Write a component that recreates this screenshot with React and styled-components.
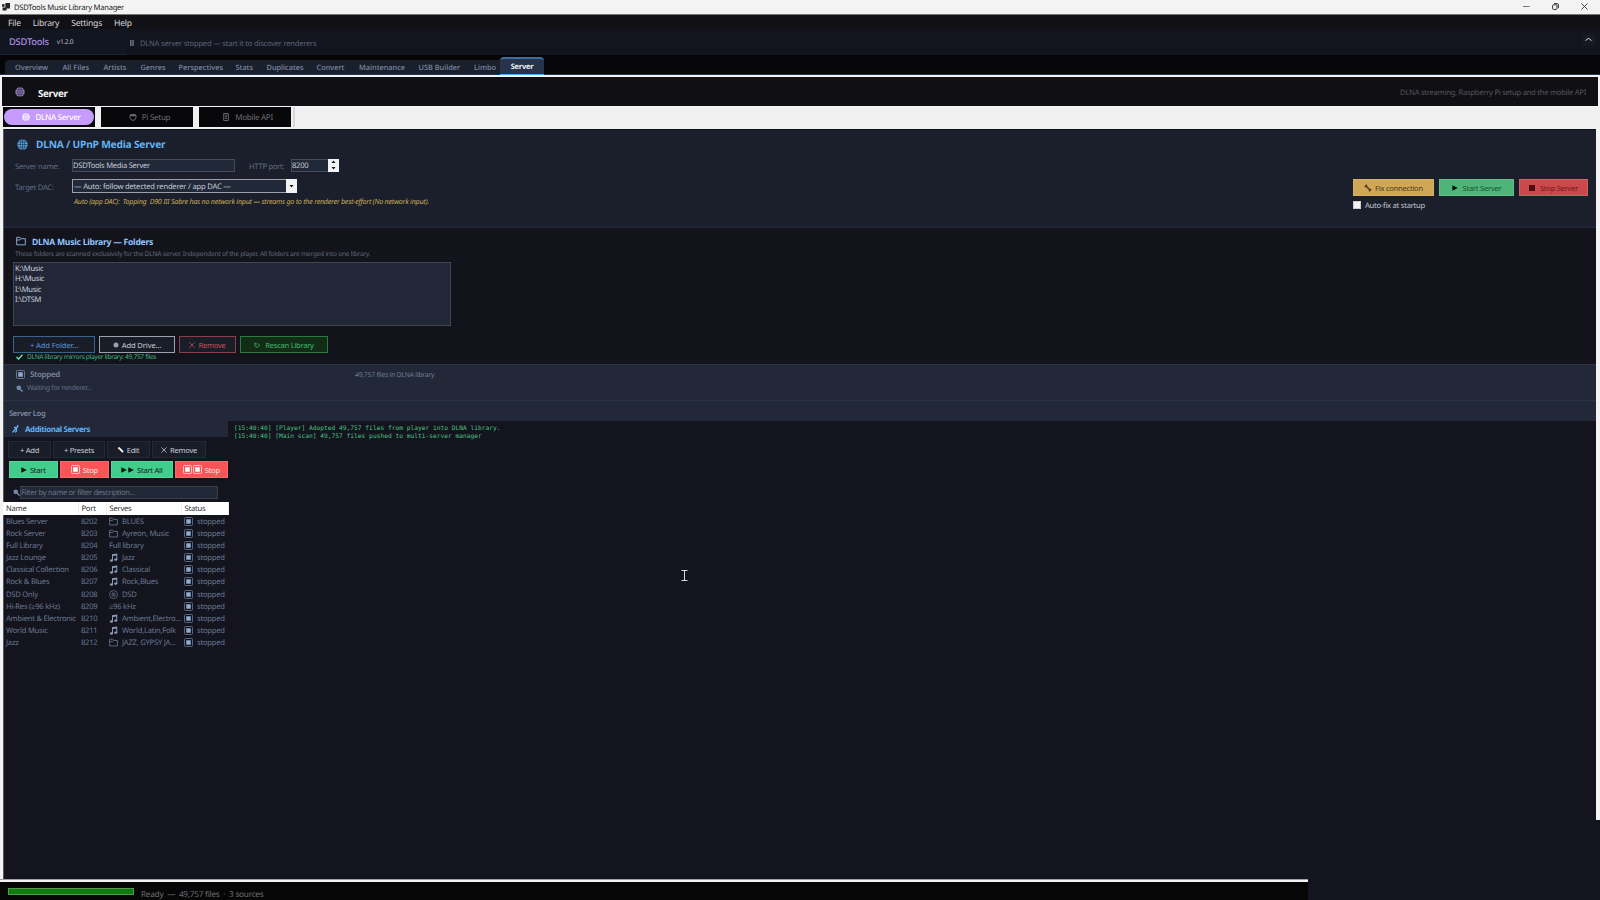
import React from 'react';
import styled, { createGlobalStyle } from 'styled-components';

const sans = "'Noto Sans', 'Open Sans', sans-serif";
const mono = "'DejaVu Sans Mono', 'Liberation Mono', monospace";

const GlobalStyle = createGlobalStyle`
  * {
    box-sizing: border-box;
  }
  body {
    margin: 0;
    background: #13141d;
    font-family: ${sans};
    text-rendering: geometricPrecision;
    overflow: hidden;
  }
  svg {
    display: block;
    flex: none;
  }
`;

const Window = styled.div`
  display: flex;
  flex-direction: column;
  width: 1600px;
  height: 900px;
  overflow: hidden;
  white-space: nowrap;
`;

const Text = styled.span`
  flex: none;
  padding-top: ${({ $pt = 2 }) => $pt}px;
  font-size: ${({ $size }) => $size || 7.6}px;
  font-weight: ${({ $weight }) => $weight || 400};
  font-style: ${({ $italic }) => ($italic ? 'italic' : 'normal')};
  letter-spacing: ${({ $track = -0.034 }) => $track}em;
  color: ${({ $color }) => $color || 'inherit'};
  margin-left: ${({ $ml }) => $ml || 0}px;
`;

const TitleBar = styled.header`
  display: flex;
  align-items: center;
  height: 15px;
  padding: 0 12px 0 2px;
  background: #f3f3f3;
  color: #222;
  border-bottom: 1px solid #777;
`;

const WindowButtons = styled.div`
  display: flex;
  align-items: center;
  gap: 22px;
  margin-left: auto;
`;

const MenuBar = styled.nav`
  display: flex;
  align-items: center;
  gap: 12px;
  height: 14px;
  padding-left: 8px;
  background: #111115;
  color: #d6d6da;
`;

const InfoBar = styled.div`
  display: flex;
  height: 26px;
  background: #12141e;
`;

const Brand = styled.div`
  display: flex;
  align-items: center;
  width: 126px;
  padding: 0 0 1px 9px;
  background: #111620;
  border-bottom: 1px solid #182335;
`;

const RendererStatus = styled.div`
  display: flex;
  flex: 1;
  align-items: center;
  padding: 2px 0 0 4px;
  color: #5c6477;
`;

const Collapse = styled.div`
  display: flex;
  align-items: center;
  justify-content: center;
  width: 13px;
  height: 12px;
  margin: 5px 5px 0 0;
  background: #1a1823;
`;

const NavBar = styled.nav`
  display: flex;
  align-items: flex-end;
  height: 21px;
  padding-left: 5px;
  background: #060608;
  border-bottom: 1px solid #1f3552;
`;

const NavTabs = styled.div`
  display: flex;
  align-items: center;
  width: 495px;
  height: 14px;
  padding: 2px 0 0 10px;
  background: #1a202b;
  border-radius: 4px 0 0 0;
  color: #7d8ba5;
`;

const NavTab = styled.div`
  width: ${({ $width }) => $width}px;
  font-size: 7.4px;
  font-weight: 500;
`;

const ActiveTab = styled.div`
  width: 44px;
  height: 18px;
  margin-bottom: -1px;
  padding-top: 3px;
  background: #283349;
  border-top: 2px solid #3e6c9f;
  border-bottom: 1px solid #57a5e8;
  border-radius: 4px 4px 0 0;
  color: #e9eef6;
  font-size: 7.5px;
  line-height: 11px;
  font-weight: 700;
  letter-spacing: -0.035em;
  text-align: center;
`;

const PageHeader = styled.div`
  display: flex;
  align-items: center;
  height: 32px;
  padding: 1px 12px 0 13px;
  background: #101014;
  border: solid #f4f4f8;
  border-width: 2px 2px 1px 2px;
`;

const HeaderNote = styled.div`
  display: flex;
  margin-left: auto;
  color: #56565e;
`;

const SubTabs = styled.div`
  display: flex;
  gap: 6px;
  height: 22px;
  padding: 0 0 2px 3px;
  background: #f0f0f0;
`;

const SubTab = styled.div`
  display: flex;
  width: 92px;
  height: 20px;
  padding: 2px 1px;
  background: #08080b;
  color: ${({ $active }) => ($active ? '#fff' : '#6c6c73')};
`;

const SubTabFace = styled.div`
  display: flex;
  flex: 1;
  align-items: center;
  justify-content: center;
  gap: 5px;
  padding-left: 5px;
  border-radius: 8px;
  background: ${({ $active }) => ($active ? '#c59cfc' : 'transparent')};
`;

const SubTabsEnd = styled.div`
  width: 2px;
  height: 20px;
  margin-left: -4px;
  background: #d8d8d8;
`;

const Workspace = styled.main`
  display: flex;
  height: 750px;
`;

const Edge = styled.div`
  width: 4px;
  height: ${({ $height }) => $height}px;
  background: #f3f3f3;
  border-right: ${({ $shade }) => ($shade ? '1px solid #55565e' : 'none')};
`;

const Panel = styled.div`
  flex: 1;
  background: #13141d;
  border-top: 1px solid #0d1016;
`;

const ServerConfig = styled.section`
  display: flex;
  justify-content: space-between;
  height: 98px;
  padding: 8px 7px 0 11px;
  background: #1a1f2b;
  border-bottom: 2px solid #202534;
`;

const SectionTitle = styled.h2`
  display: flex;
  align-items: center;
  height: ${({ $height }) => $height}px;
  margin: 0;
  padding-left: ${({ $pl }) => $pl || 0}px;
  color: #8ab4e6;
`;

const FormRow = styled.div`
  display: flex;
  align-items: center;
  height: 14px;
  margin-top: ${({ $mt }) => $mt}px;
`;

const FieldLabel = styled.label`
  width: ${({ $width }) => $width}px;
  margin-left: ${({ $ml }) => $ml || 0}px;
  padding-top: 4px;
  font-size: 7.6px;
  line-height: 10px;
  letter-spacing: -0.034em;
  color: #616d85;
`;

const Field = styled.div`
  display: flex;
  align-items: center;
  justify-content: space-between;
  width: ${({ $width }) => $width}px;
  height: ${({ $height }) => $height || 13}px;
  background: #212837;
  border: 1px solid ${({ $border }) => $border || '#454b5a'};
  color: #c6cbd6;
`;

const Spinner = styled.div`
  display: flex;
  flex-direction: column;
  align-items: center;
  justify-content: space-around;
  width: 11px;
  height: 13px;
  margin-right: -1px;
  background: #f2f2f2;
`;

const DropButton = styled.div`
  display: flex;
  align-items: center;
  justify-content: center;
  width: 11px;
  height: 14px;
  margin-right: -1px;
  background: #f2f2f2;
`;

const Hint = styled.div`
  display: flex;
  align-items: center;
  height: 15px;
  padding-left: 59px;
  color: #c8ab58;
`;

const ServerActions = styled.div`
  display: grid;
  grid-template-columns: 81px 75px 69px;
  align-content: start;
  column-gap: 5px;
  margin: 41px 1px 0 0;
`;

const SolidButton = styled.button`
  display: flex;
  align-items: center;
  justify-content: center;
  gap: ${({ $gap }) => $gap || 3}px;
  width: ${({ $width }) => ($width ? `${$width}px` : 'auto')};
  height: 17px;
  padding: 0;
  border: 1px solid rgba(255, 255, 255, 0.12);
  background: ${({ $bg }) => $bg};
  color: ${({ $fg }) => $fg};
  font-family: inherit;
  overflow: hidden;
`;

const CheckRow = styled.label`
  display: flex;
  align-items: center;
  height: 12px;
  margin-top: 3px;
  color: #c3c8d2;
`;

const CheckBox = styled.span`
  width: 8px;
  height: 8px;
  background: #f3f3f3;
  border: 1px solid #ccc;
`;

const FolderSection = styled.section`
  height: 136px;
  padding: 7px 0 0 9px;
  background: #12131b;
`;

const FolderNote = styled.div`
  display: flex;
  align-items: center;
  height: 10px;
  margin: 0 0 5px 2px;
  color: #626a7c;
`;

const FolderList = styled.ul`
  width: 438px;
  height: 64px;
  margin: 0;
  padding: 1px 1px;
  list-style: none;
  background: #212736;
  border: 1px solid #41464f;
  color: #c9cfdb;
  font-size: 7.6px;
  line-height: 10.35px;
  letter-spacing: -0.034em;
`;

const ButtonRow = styled.div`
  display: flex;
  gap: ${({ $gap }) => $gap}px;
  margin-top: ${({ $mt }) => $mt}px;
  margin-left: ${({ $ml }) => $ml || 0}px;
`;

const OutlineButton = styled.button`
  display: flex;
  align-items: center;
  justify-content: center;
  gap: ${({ $gap }) => $gap || 3}px;
  width: ${({ $width }) => $width}px;
  height: 17px;
  padding: 0;
  background: ${({ $bg }) => $bg || '#191d28'};
  border: 1px solid ${({ $border }) => $border || '#242936'};
  color: ${({ $fg }) => $fg || '#c7ccd6'};
  font-family: inherit;
`;

const Mirrors = styled.div`
  display: flex;
  align-items: center;
  height: 7px;
  padding-left: 3px;
  color: #41b883;
`;

const StatusSection = styled.section`
  height: 37px;
  padding: 2px 0 0 12px;
  background: #222838;
  border-top: 1px solid #2a3244;
  border-bottom: 1px solid #2b3243;
`;

const StatusRow = styled.div`
  display: flex;
  align-items: center;
  height: 14px;
  color: #7c879d;
`;

const LogTitle = styled.div`
  display: flex;
  align-items: center;
  height: 20px;
  padding: 3px 0 0 5px;
  background: #222838;
  color: #7f8ba4;
`;

const LogArea = styled.div`
  display: flex;
`;

const Additional = styled.aside`
  width: 224px;
`;

const AdditionalHeader = styled.div`
  display: flex;
  align-items: center;
  height: 16px;
  padding-left: 8px;
  background: #222838;
`;

const ButtonPad = styled.div`
  padding: 4px 0 0 5px;
`;

const FilterRow = styled.div`
  display: flex;
  align-items: center;
  height: 13px;
  margin-top: 8px;
  padding-left: 9px;
`;

const ServerTable = styled.table`
  width: 225px;
  margin: 3px 0 0 -1px;
  border-collapse: collapse;
  table-layout: fixed;
  font-size: 7.6px;
  letter-spacing: -0.03em;
  color: #6c7892;
  th,
  td {
    height: 12.08px;
    padding: 1px 0 0 3px;
    line-height: 11px;
    text-align: left;
    font-weight: 400;
  }
  th {
    height: 13px;
    background: #fff;
    color: #333;
    border-right: 1px solid #eee;
  }
`;

const TableCol = styled.col`
  width: ${({ $width }) => $width}px;
`;

const CellText = styled.div`
  height: 11px;
  line-height: 13px;
`;

const CellContent = styled.div`
  display: flex;
  align-items: center;
  gap: 4px;
  height: 11px;
  line-height: 11px;
`;

const LogOutput = styled.pre`
  margin: 0;
  padding: 4px 0 0 6px;
  font-family: ${mono};
  font-size: 6.24px;
  line-height: 8.4px;
  color: #4cc286;
`;

const BottomLine = styled.div`
  width: 1308px;
  height: 3px;
  background: #f3f3f3;
  border-top: 1px solid #a0a0a4;
`;

const StatusBar = styled.footer`
  display: flex;
  width: 1308px;
  height: 18px;
  padding: 6px 0 0 8px;
  background: #060607;
  color: #6e6e73;
`;

const Progress = styled.div`
  width: 126px;
  height: 7px;
  background: #107c10;
  border: 1px solid #4d9b4d;
`;

const Cursor = styled.div`
  position: absolute;
  left: 681px;
  top: 570px;
`;

function Globe({ size = 10, color, line = '#1a1f2b' }) {
  return (
    <svg width={size} height={size} viewBox="0 0 12 12">
      <circle cx="6" cy="6" r="5.6" fill={color} />
      <g fill="none" stroke={line} strokeWidth="0.6">
        <ellipse cx="6" cy="6" rx="2.5" ry="5.4" />
        <path d="M6 .5v11M.5 6h11M1.3 3.3h9.4M1.3 8.7h9.4" />
      </g>
    </svg>
  );
}

const FolderIcon = ({ size = 9 }) => (
  <svg width={size} height={size} viewBox="0 0 12 12" fill="none" stroke="currentColor" strokeWidth="1.1">
    <path d="M.8 10.6V1.6h4l1.2 1.6h5.2v7.4zM.8 4.8h3.8L6 3.2" />
  </svg>
);

const NoteIcon = () => (
  <svg width="9" height="9" viewBox="0 0 12 12" fill="#8a9cba">
    <path d="M4 1.6 11 .6v8H9.7V3.4L5.3 4v6.2H4z" />
    <ellipse cx="3.3" cy="10" rx="2.1" ry="1.6" />
    <ellipse cx="9" cy="8.8" rx="2.1" ry="1.6" />
  </svg>
);

const DiscIcon = () => (
  <svg width="9" height="9" viewBox="0 0 12 12" fill="none" stroke="currentColor">
    <circle cx="6" cy="6" r="5.3" />
    <circle cx="6" cy="6" r="2.2" />
    <circle cx="6" cy="6" r=".6" />
  </svg>
);

const StopIcon = ({ size = 9, fill = '#8eabd4' }) => (
  <svg width={size} height={size} viewBox="0 0 12 12">
    <rect x=".7" y=".7" width="10.6" height="10.6" rx="1.2" fill="none" stroke="currentColor" strokeWidth="1.1" />
    <rect x="3" y="3" width="6" height="6" fill={fill} />
  </svg>
);

const SearchIcon = () => (
  <svg width="7" height="7" viewBox="0 0 10 10">
    <circle cx="4" cy="4" r="3.4" fill="#6f87a8" />
    <path d="m6 6 3.3 3.3" stroke="#8d9bb0" strokeWidth="1.7" />
  </svg>
);

const PlayIcon = () => (
  <svg width="6" height="6" viewBox="0 0 6 6">
    <path d="M.3.2 5.8 3 .3 5.8z" fill="#0b120e" />
  </svg>
);

const CrossIcon = ({ size = 6 }) => (
  <svg width={size} height={size} viewBox="0 0 8 8" stroke="currentColor" strokeWidth="1">
    <path d="m.5.5 7 7m0-7-7 7" />
  </svg>
);

const Triangle = ({ up }) => (
  <svg width="5" height="3" viewBox="0 0 5 3">
    <path d={up ? 'M.5 3h4L2.5.4z' : 'M.5 0h4L2.5 2.6z'} fill="#111" />
  </svg>
);

const navTabs = [
  ['Overview', 47.5],
  ['All Files', 41],
  ['Artists', 37],
  ['Genres', 38],
  ['Perspectives', 57],
  ['Stats', 31],
  ['Duplicates', 50],
  ['Convert', 42.5],
  ['Maintenance', 59.5],
  ['USB Builder', 55.5],
  ['Limbo', 26],
];

const servers = [
  ['Blues Server', 8202, 'folder', 'BLUES'],
  ['Rock Server', 8203, 'folder', 'Ayreon, Music'],
  ['Full Library', 8204, null, 'Full library'],
  ['Jazz Lounge', 8205, 'note', 'Jazz'],
  ['Classical Collection', 8206, 'note', 'Classical'],
  ['Rock & Blues', 8207, 'note', 'Rock,Blues'],
  ['DSD Only', 8208, 'disc', 'DSD'],
  ['Hi-Res (≥96 kHz)', 8209, null, '≥96 kHz'],
  ['Ambient & Electronic', 8210, 'note', 'Ambient,Electro...'],
  ['World Music', 8211, 'note', 'World,Latin,Folk'],
  ['Jazz', 8212, 'folder', 'JAZZ, GYPSY JA...'],
];

const serveIcons = { folder: <FolderIcon />, note: <NoteIcon />, disc: <DiscIcon /> };

function TopBars() {
  return (
    <>
      <TitleBar>
        <svg width="8" height="8" viewBox="0 0 8 8" fill="#222">
          <path d="M3.4 0H8v5.4H3.4zM0 1.2h2.6v2.6H0zM.6 4.6h4v2.800h-4z" />
        </svg>
        <Text $ml={4} $track={-0.032}>DSDTools Music Library Manager</Text>
        <WindowButtons>
          <svg width="7" height="7" viewBox="0 0 7 7"><path d="M0 3.5h6.5" stroke="#777" /></svg>
          <svg width="7" height="7" viewBox="0 0 7 7" fill="none" stroke="#333">
            <rect x=".6" y="1.8" width="4.4" height="4.6" rx=".8" />
            <path d="M2 .6h3.2q1.2 0 1.2 1.2v3.4" />
          </svg>
          <svg width="7" height="7" viewBox="0 0 7 7" stroke="#333" strokeWidth=".9">
            <path d="m.4.4 6.2 6.2m0-6.2L.4 6.6" />
          </svg>
        </WindowButtons>
      </TitleBar>
      <MenuBar>
        {['File', 'Library', 'Settings', 'Help'].map((item) => (
          <Text key={item} $size={8.6} $pt={3} $track={-0.028}>{item}</Text>
        ))}
      </MenuBar>
      <InfoBar>
        <Brand>
          <Text $size={9.4} $color="#ab8ce0" $weight={500} $track={-0.025}>DSDTools</Text>
          <Text $size={6.6} $ml={8} $color="#b6bac4" $track={-0.05}>v1.2.0</Text>
        </Brand>
        <RendererStatus>
          <svg width="4" height="6" viewBox="0 0 4 6" fill="#6c7488"><path d="M0 0h1.5v6H0zM2.3 0h1.5v6H2.3z" /></svg>
          <Text $ml={6} $track={-0.03}>DLNA server stopped — start it to discover renderers</Text>
        </RendererStatus>
        <Collapse>
          <svg width="7" height="5" viewBox="0 0 7 5" fill="none" stroke="#d5d5dc"><path d="M.6 3.8Q3.5-.8 6.4 3.8" /></svg>
        </Collapse>
      </InfoBar>
      <NavBar>
        <NavTabs>
          {navTabs.map(([label, width]) => (
            <NavTab key={label} $width={width}>{label}</NavTab>
          ))}
        </NavTabs>
        <ActiveTab>Server</ActiveTab>
      </NavBar>
      <PageHeader>
        <Globe color="#a78bd6" line="#101014" />
        <Text $size={9.8} $weight={700} $color="#f3f3f5" $ml={13}>Server</Text>
        <HeaderNote><Text $track={-0.033}>DLNA streaming, Raspberry Pi setup and the mobile API</Text></HeaderNote>
      </PageHeader>
      <SubTabs>
        <SubTab $active>
          <SubTabFace $active>
            <Globe size={8} color="#fff" line="#c59cfc" />
            <Text $size={8} $weight={500} $pt={1}>DLNA Server</Text>
          </SubTabFace>
        </SubTab>
        <SubTab>
          <SubTabFace>
            <svg width="8" height="8" viewBox="0 0 8 8" fill="none" stroke="currentColor">
              <path d="M1 2.4v2Q1.5 7 4 7.5 6.5 7 7 4.4v-2L4 1.2z" />
              <path d="M1 2.4h6" strokeWidth="1.6" />
            </svg>
            <Text $size={8} $pt={1}>Pi Setup</Text>
          </SubTabFace>
        </SubTab>
        <SubTab>
          <SubTabFace>
            <svg width="8" height="8" viewBox="0 0 8 8" fill="none" stroke="currentColor" strokeWidth=".9">
              <path d="M1.7.5h4.6v7H1.7zM2.8 2.2h2.4M2.8 3.8h2.4M2.8 5.4h2.4" />
            </svg>
            <Text $size={8} $pt={1}>Mobile API</Text>
          </SubTabFace>
        </SubTab>
        <SubTabsEnd />
      </SubTabs>
    </>
  );
}

function MediaServer() {
  return (
    <ServerConfig>
      <div>
        <SectionTitle $height={12} $pl={2}>
          <Globe size={11} color="#58a9ea" />
          <Text $size={10.2} $weight={700} $color="#63b3f5" $ml={8} $pt={0} $track={-0.02}>DLNA / UPnP Media Server</Text>
        </SectionTitle>
        <FormRow $mt={8}>
          <FieldLabel $width={57}>Server name:</FieldLabel>
          <Field $width={163}><Text>DSDTools Media Server</Text></Field>
          <FieldLabel $width={42} $ml={14}>HTTP port:</FieldLabel>
          <Field $width={48}>
            <Text>8200</Text>
            <Spinner><Triangle up /><Triangle /></Spinner>
          </Field>
        </FormRow>
        <FormRow $mt={7}>
          <FieldLabel $width={57}>Target DAC:</FieldLabel>
          <Field $width={225} $height={14} $border="#9b9fa8">
            <Text $ml={1} $track={-0.026}>— Auto: follow detected renderer / app DAC —</Text>
            <DropButton><Triangle /></DropButton>
          </Field>
        </FormRow>
        <Hint>
          <Text $size={7.1} $italic $track={-0.032}>Auto (app DAC):&nbsp; Topping&nbsp; D90 III Sabre has no network input — streams go to the renderer best-effort (No network input).</Text>
        </Hint>
      </div>
      <ServerActions>
        <SolidButton $bg="#cfa755" $fg="#4a3b1c">
          <svg width="8" height="8" viewBox="0 0 8 8" fill="none" stroke="currentColor">
            <path d="M.8 3 3 .8M2 2l4 4M5 7.200 7.200 5" strokeWidth="1.5" />
          </svg>
          <Text $pt={1}>Fix connection</Text>
        </SolidButton>
        <SolidButton $bg="#4fb477" $fg="#14542f" $gap={5}>
          <PlayIcon />
          <Text $pt={1}>Start Server</Text>
        </SolidButton>
        <SolidButton $bg="#cb484b" $fg="#6d1b1f" $gap={5}>
          <svg width="6" height="6"><rect width="6" height="6" fill="#4c1013" /></svg>
          <Text $pt={1}>Stop Server</Text>
        </SolidButton>
        <CheckRow>
          <CheckBox />
          <Text $ml={4} $pt={1}>Auto-fix at startup</Text>
        </CheckRow>
      </ServerActions>
    </ServerConfig>
  );
}

function MusicFolders() {
  return (
    <FolderSection>
      <SectionTitle $height={12} $pl={3}>
        <FolderIcon size={10} />
        <Text $size={8.6} $weight={700} $color="#93c5fd" $ml={6} $track={-0.03}>DLNA Music Library — Folders</Text>
      </SectionTitle>
      <FolderNote>
        <Text $size={6.6} $track={-0.034}>These folders are scanned exclusively for the DLNA server. Independent of the player. All folders are merged into one library.</Text>
      </FolderNote>
      <FolderList>
        {['K:\\Music', 'H:\\Music', 'I:\\Music', 'I:\\DTSM'].map((path) => (
          <li key={path}>{path}</li>
        ))}
      </FolderList>
      <ButtonRow $gap={4} $mt={10}>
        <OutlineButton $width={82} $border="#3c618c" $fg="#5995d6"><Text $pt={1} $track={-0.015}>+ Add Folder...</Text></OutlineButton>
        <OutlineButton $width={76} $border="#9da1ab" $fg="#c8ccd5">
          <svg width="6" height="6" viewBox="0 0 6 6"><circle cx="3" cy="3" r="2.5" fill="currentColor" opacity=".75" /></svg>
          <Text $pt={1} $track={-0.015}>Add Drive...</Text>
        </OutlineButton>
        <OutlineButton $width={57} $border="#8a3e4b" $fg="#cc4f58"><CrossIcon /><Text $pt={1}>Remove</Text></OutlineButton>
        <OutlineButton $width={88} $border="#2b7a41" $bg="#122c16" $fg="#3fb86b" $gap={5}>
          <svg width="6" height="6" viewBox="0 0 6 6" fill="none" stroke="currentColor" strokeWidth=".8">
            <path d="M1.4 1.5a2.2 2.2 0 1 0 3.2 0M.4 1.3h1.8v1.5" />
          </svg>
          <Text $pt={1}>Rescan Library</Text>
        </OutlineButton>
      </ButtonRow>
      <Mirrors>
        <svg width="7" height="6" viewBox="0 0 7 6" fill="none" stroke="#68dfa4" strokeWidth="1.5"><path d="m.5 3 2 2L6.5.7" /></svg>
        <Text $size={6.6} $ml={4} $pt={0} $track={-0.048}>DLNA library mirrors player library: 49,757 files</Text>
      </Mirrors>
    </FolderSection>
  );
}

function AdditionalServers() {
  return (
    <Additional>
      <AdditionalHeader>
        <svg width="7" height="8" viewBox="0 0 7 8" fill="none" stroke="#5cb0f5" strokeWidth="1.3">
          <path d="M.5 7.5 3 4.5M2 2.5h2.5v3M3 4.500l3-3M5 .7h1.500M3 7.300l2-1.500" />
        </svg>
        <Text $size={7.9} $weight={700} $color="#5fb0f4" $ml={6} $track={-0.05}>Additional Servers</Text>
      </AdditionalHeader>
      <ButtonPad>
        <ButtonRow $gap={2} $mt={0} $ml={-1}>
          <OutlineButton $width={43}><Text $pt={1}>+ Add</Text></OutlineButton>
          <OutlineButton $width={52}><Text $pt={1}>+ Presets</Text></OutlineButton>
          <OutlineButton $width={43}>
            <svg width="6" height="6" viewBox="0 0 6 6"><path d="m.5.5 4.5 4.5" stroke="#fff" strokeWidth="1.8" /></svg>
            <Text $pt={1}>Edit</Text>
          </OutlineButton>
          <OutlineButton $width={54}><CrossIcon /><Text $pt={1}>Remove</Text></OutlineButton>
        </ButtonRow>
        <ButtonRow $gap={2} $mt={3}>
          <SolidButton $width={49} $bg="#41cd8b" $fg="#10281c"><PlayIcon /><Text $pt={1}>Start</Text></SolidButton>
          <SolidButton $width={50} $bg="#fb5458" $fg="#ffe3e3">
            <StopIcon fill="#fff" /><Text $pt={1}>Stop</Text>
          </SolidButton>
          <SolidButton $width={62} $bg="#41cd8b" $fg="#10281c" $gap={1}><PlayIcon /><PlayIcon /><Text $ml={2} $pt={1}>Start All</Text></SolidButton>
          <SolidButton $width={54} $bg="#fb5458" $fg="#ffe3e3" $gap={1}>
            <StopIcon fill="#fff" /><StopIcon fill="#fff" /><Text $ml={2} $pt={1}>Stop</Text>
          </SolidButton>
        </ButtonRow>
      </ButtonPad>
      <FilterRow>
        <SearchIcon />
        <Field $width={198} $border="#3b3f4a"><Text $color="#6b7280" $pt={0} $track={-0.045}>Filter by name or filter description...</Text></Field>
      </FilterRow>
      <ServerTable>
        <colgroup>
          <TableCol $width={75} />
          <TableCol $width={28} />
          <TableCol $width={75} />
          <TableCol $width={47} />
        </colgroup>
        <thead>
          <tr><th>Name</th><th>Port</th><th>Serves</th><th>Status</th></tr>
        </thead>
        <tbody>
          {servers.map(([name, port, icon, serves]) => (
            <tr key={port}>
              <td><CellText>{name}</CellText></td>
              <td><CellText>{port}</CellText></td>
              <td><CellContent>{icon && serveIcons[icon]}<CellText>{serves}</CellText></CellContent></td>
              <td><CellContent><StopIcon /><CellText>stopped</CellText></CellContent></td>
            </tr>
          ))}
        </tbody>
      </ServerTable>
    </Additional>
  );
}

export default function App() {
  return (
    <Window>
      <GlobalStyle />
      <TopBars />
      <Workspace>
        <Edge $height={750} $shade />
        <Panel>
          <MediaServer />
          <MusicFolders />
          <StatusSection>
            <StatusRow>
              <StopIcon />
              <Text $size={7.9} $weight={600} $ml={5} $pt={1}>Stopped</Text>
              <Text $size={6.8} $color="#717e96" $ml={295} $pt={1}>49,757 files in DLNA library</Text>
            </StatusRow>
            <StatusRow>
              <SearchIcon />
              <Text $size={7} $color="#626f88" $ml={4} $pt={1} $track={-0.045}>Waiting for renderer...</Text>
            </StatusRow>
          </StatusSection>
          <LogTitle><Text $weight={600} $track={-0.04}>Server Log</Text></LogTitle>
          <LogArea>
            <AdditionalServers />
            <LogOutput>
              {'[15:40:40] [Player] Adopted 49,757 files from player into DLNA library.\n[15:40:40] [Main scan] 49,757 files pushed to multi-server manager'}
            </LogOutput>
          </LogArea>
        </Panel>
        <Edge $height={691} />
      </Workspace>
      <BottomLine />
      <StatusBar>
        <Progress />
        <Text $size={8.2} $ml={7} $pt={1} $track={-0.028}>Ready&nbsp; —&nbsp; 49,757 files&nbsp; ·&nbsp; 3 sources</Text>
      </StatusBar>
      <Cursor>
        <svg width="7" height="11" viewBox="0 0 7 11" fill="none" stroke="#d9d9de">
          <path d="M.5.5h6M3.5.5v10M.5 10.5h6" />
        </svg>
      </Cursor>
    </Window>
  );
}
